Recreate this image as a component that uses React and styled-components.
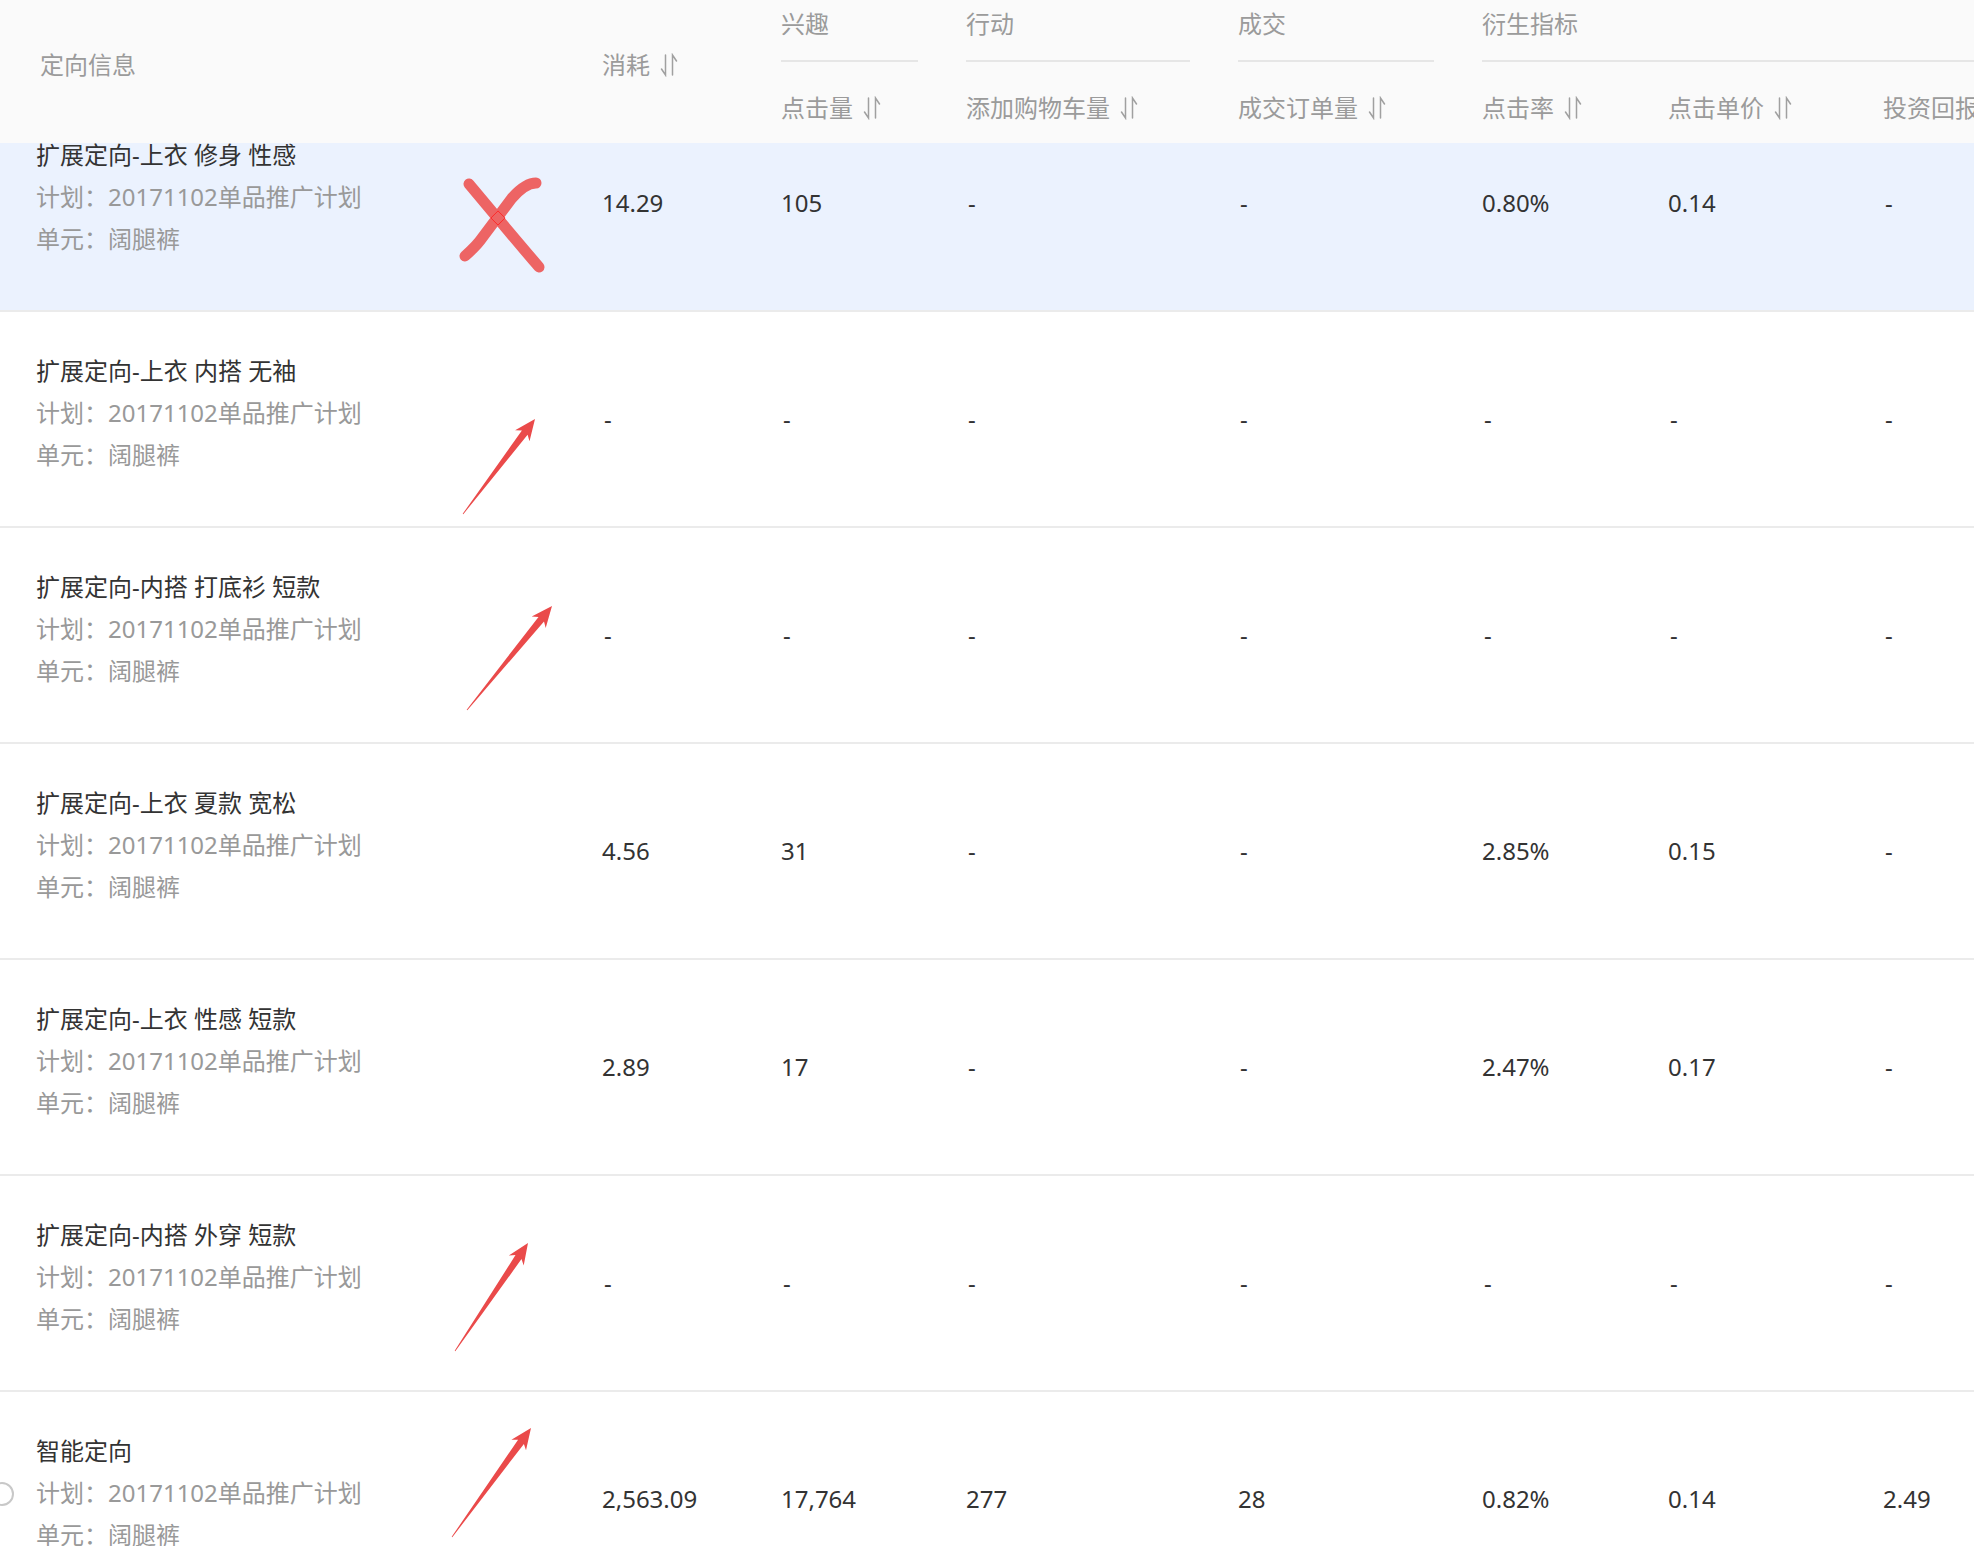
import React, { useLayoutEffect, useRef } from "react";
import styled, { createGlobalStyle } from "styled-components";

const GlobalStyle = createGlobalStyle`
  html, body {
    margin: 0;
    padding: 0;
    background: #fff;
  }
  body {
    font-family: "Noto Sans", "Noto Sans CJK SC", sans-serif;
  }
`;

const COLS = "602px 179px 185px 272px 244px 186px 215px 200px";

const Frame = styled.div`
  position: relative;
  width: 100vw;
  height: 100vh;
  overflow: hidden;
`;

const Scroller = styled.div`
  height: 100%;
  overflow: auto;
  scrollbar-width: none;
  &::-webkit-scrollbar {
    display: none;
  }
`;

const Table = styled.div`
  width: 2083px;
  font-size: 24px;
  line-height: 42px;
`;

const Head = styled.div`
  position: sticky;
  top: 0;
  z-index: 2;
  display: grid;
  grid-template-columns: ${COLS};
  grid-template-rows: 62px 81px;
  background: #fafafa;
  color: #9b9b9b;
`;

const HeadMain = styled.div`
  grid-row: 1 / 3;
  grid-column: ${(p) => p.col};
  align-self: center;
  padding-left: ${(p) => p.pad || 0}px;
  padding-bottom: 13px;
  display: flex;
  align-items: center;
  gap: 10px;
`;

const Group = styled.div`
  grid-row: 1;
  grid-column: ${(p) => p.col};
  margin-right: ${(p) => (p.open ? 0 : 48)}px;
  padding-top: 3px;
  box-sizing: border-box;
  border-bottom: 2px solid #e6e6e6;
`;

const SubHead = styled.div`
  grid-row: 2;
  grid-column: ${(p) => p.col};
  padding-top: 25px;
  display: flex;
  align-items: flex-start;
  gap: 10px;
  white-space: nowrap;
`;

const SortWrap = styled.span`
  display: inline-flex;
  height: 42px;
  align-items: center;
`;

const SortIcon = () => (
  <SortWrap>
    <svg width="18" height="24" viewBox="0 0 18 24" fill="none" stroke="#a0a0a0" strokeWidth="1.5" strokeLinecap="round">
      <path d="M5.5 2 V22 L1.5 16" />
      <path d="M12.5 22 V2 L16.5 8" />
    </svg>
  </SortWrap>
);

const Row = styled.div`
  display: grid;
  grid-template-columns: ${COLS};
  height: 216px;
  box-sizing: border-box;
  border-bottom: 2px solid #ebebeb;
  background: ${(p) => (p.active ? "#ebf2fe" : "#fff")};
`;

const InfoCell = styled.div`
  position: relative;
  padding: 38px 0 0 36px;
`;

const Title = styled.div`
  color: #333;
  white-space: nowrap;
`;

const Meta = styled.div`
  position: relative;
  color: #999;
  white-space: nowrap;
`;

const HintDot = styled.span`
  position: absolute;
  left: -46px;
  top: 10px;
  width: 20px;
  height: 20px;
  border: 2px solid #c8c8c8;
  border-radius: 50%;
`;

const Num = styled.div`
  align-self: center;
  color: #333;
  white-space: nowrap;
  padding-left: ${(p) => (p.dash ? 2 : 0)}px;
`;

const Overlay = styled.svg`
  position: absolute;
  left: 0;
  top: 0;
  pointer-events: none;
  z-index: 3;
`;

const rows = [
  { title: "扩展定向-上衣 修身 性感", vals: ["14.29", "105", "-", "-", "0.80%", "0.14", "-"], active: true },
  { title: "扩展定向-上衣 内搭 无袖", vals: ["-", "-", "-", "-", "-", "-", "-"] },
  { title: "扩展定向-内搭 打底衫 短款", vals: ["-", "-", "-", "-", "-", "-", "-"] },
  { title: "扩展定向-上衣 夏款 宽松", vals: ["4.56", "31", "-", "-", "2.85%", "0.15", "-"] },
  { title: "扩展定向-上衣 性感 短款", vals: ["2.89", "17", "-", "-", "2.47%", "0.17", "-"] },
  { title: "扩展定向-内搭 外穿 短款", vals: ["-", "-", "-", "-", "-", "-", "-"] },
  { title: "智能定向", vals: ["2,563.09", "17,764", "277", "28", "0.82%", "0.14", "2.49"], hint: true },
];

const arrows = [
  [463, 514, 535, 419],
  [467, 710, 552, 606],
  [455, 1351, 528, 1243],
  [452, 1537, 531, 1428],
];

// tapered arrow polygon from tail to tip
const arrowPoints = (x1, y1, x2, y2) => {
  const dx = x2 - x1;
  const dy = y2 - y1;
  const len = Math.hypot(dx, dy);
  const ux = dx / len;
  const uy = dy / len;
  const nx = -uy;
  const ny = ux;
  const at = (t, w) => [x1 + ux * t + nx * w, y1 + uy * t + ny * w];
  const base = len - 20;
  const pts = [
    at(0, 0.4),
    at(base + 3, 3.6),
    at(base - 1, 9),
    at(len, 0),
    at(base - 1, -9),
    at(base + 3, -3.6),
    at(0, -0.4),
  ];
  return pts.map((p) => p.map((v) => v.toFixed(1)).join(",")).join(" ");
};

const Annotations = () => (
  <Overlay width="1974" height="1546" viewBox="0 0 1974 1546">
    <g fill="none" stroke="#ed6464" strokeWidth="11" strokeLinecap="round" strokeLinejoin="round">
      <path d="M469 184 C 490 209, 514 238, 539 267" />
      <path d="M536 183 C 528 183, 520 189, 512 198 L 482 238 C 478 244, 474 248, 465 256" />
    </g>
    <rect x="493" y="213" width="10" height="10" fill="none" stroke="#ff2020" strokeWidth="0.8" transform="rotate(45 498 218)" />
    {arrows.map((a, i) => (
      <polygon key={i} points={arrowPoints(...a)} fill="#ea4a4a" />
    ))}
  </Overlay>
);

const App = () => {
  const scrollRef = useRef(null);

  useLayoutEffect(() => {
    if (scrollRef.current) scrollRef.current.scrollTop = 47;
  }, []);

  return (
    <Frame>
      <GlobalStyle />
      <Scroller ref={scrollRef}>
        <Table>
          <Head>
            <HeadMain col={1} pad={40}>定向信息</HeadMain>
            <HeadMain col={2}>
              消耗 <SortIcon />
            </HeadMain>
            <Group col={3}>兴趣</Group>
            <Group col={4}>行动</Group>
            <Group col={5}>成交</Group>
            <Group col="6 / 9" open>衍生指标</Group>
            <SubHead col={3}>点击量 <SortIcon /></SubHead>
            <SubHead col={4}>添加购物车量 <SortIcon /></SubHead>
            <SubHead col={5}>成交订单量 <SortIcon /></SubHead>
            <SubHead col={6}>点击率 <SortIcon /></SubHead>
            <SubHead col={7}>点击单价 <SortIcon /></SubHead>
            <SubHead col={8}>投资回报率 <SortIcon /></SubHead>
          </Head>
          {rows.map((r, i) => (
            <Row key={i} active={r.active}>
              <InfoCell>
                <Title>{r.title}</Title>
                <Meta>
                  {r.hint && <HintDot />}
                  计划：20171102单品推广计划
                </Meta>
                <Meta>单元：阔腿裤</Meta>
              </InfoCell>
              {r.vals.map((v, j) => (
                <Num key={j} dash={v === "-"}>{v}</Num>
              ))}
            </Row>
          ))}
        </Table>
      </Scroller>
      <Annotations />
    </Frame>
  );
};

export default App;
